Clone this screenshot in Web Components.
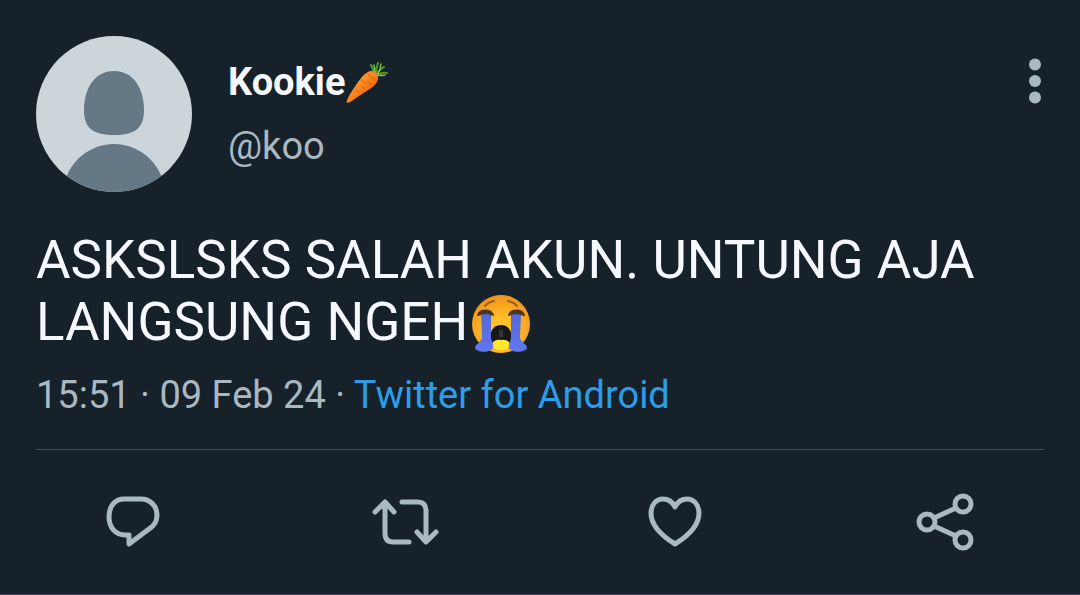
<!DOCTYPE html>
<html lang="id">
<head>
<meta charset="utf-8">
<meta name="viewport" content="width=device-width, initial-scale=1">
<title>Tweet</title>
<style>
  body {
    margin: 0;
    min-height: 100vh;
    box-sizing: border-box;
    border-bottom: 1px solid #3f4459;
    background: #16212a;
    color: #f5f8fc;
    font-family: Roboto, "Liberation Sans", sans-serif;
    --muted: #aab8c2;
    --link: #2b9de9;
    --line: #435059;
  }
</style>
</head>
<body>
<tweet-card>
  <tweet-header slot="header" handle="@koo">Kookie<tweet-emoji name="carrot"></tweet-emoji></tweet-header>
  ASKSLSKS SALAH AKUN. UNTUNG AJA LANGSUNG NGEH<tweet-emoji name="sob"></tweet-emoji>
  <tweet-meta slot="meta" source="Twitter for Android">15:51 · 09 Feb 24 · </tweet-meta>
  <tweet-actions slot="actions"></tweet-actions>
</tweet-card>

<script>
// small helper: every component only needs a shadow root with its markup
function render(el, html) {
  el.attachShadow({ mode: "open" }).innerHTML = html;
}

class TweetCard extends HTMLElement {
  constructor() {
    super();
    render(this, `
      <style>
        :host { display: block; }
        .content { padding: 36px 36px 0; }
        p {
          margin: 37px 0 18px;
          font-size: 53px;
          line-height: 62px;
        }
        hr {
          margin: 30px 0;
          border: 0;
          border-top: 1px solid var(--line);
        }
      </style>
      <article>
        <div class="content">
          <slot name="header"></slot>
          <p><slot></slot></p>
          <slot name="meta"></slot>
          <hr>
        </div>
        <slot name="actions"></slot>
      </article>
    `);
  }
}

class TweetAvatar extends HTMLElement {
  constructor() {
    super();
    render(this, `
      <style>
        :host { display: block; flex: none; width: 156px; height: 156px; border-radius: 50%; overflow: hidden; background: #ccd6da; }
        svg { display: block; width: 100%; height: 100%; }
      </style>
      <svg viewBox="0 0 156 156" fill="#657886" role="img" aria-label="Avatar">
        <path d="M78 35C97 35 108 52 108 74C108 93 98 99 78 99C58 99 48 93 48 74C48 52 59 35 78 35Z"/>
        <circle cx="78" cy="159" r="51"/>
      </svg>
    `);
  }
}

class TweetHeader extends HTMLElement {
  constructor() {
    super();
    render(this, `
      <style>
        :host { display: block; }
        header { display: flex; align-items: center; gap: 36px; }
        .user { flex: 1; font-size: 38px; line-height: 64px; }
        .row { display: flex; justify-content: space-between; align-items: center; }
        .name { font-weight: 700; }
        .handle { color: var(--muted); }
        button { display: block; padding: 0; border: 0; background: none; color: var(--muted); cursor: pointer; }
        svg { display: block; width: 18px; height: 48px; }
      </style>
      <header>
        <tweet-avatar></tweet-avatar>
        <div class="user">
          <div class="row">
            <span class="name"><slot></slot></span>
            <button type="button" aria-label="Menu">
              <svg viewBox="0 0 18 48" fill="currentColor">
                <circle cx="9" cy="6.5" r="6"/><circle cx="9" cy="23" r="6"/><circle cx="9" cy="39.5" r="6"/>
              </svg>
            </button>
          </div>
          <div class="handle">${this.getAttribute("handle")}</div>
        </div>
      </header>
    `);
  }
}

class TweetMeta extends HTMLElement {
  constructor() {
    super();
    render(this, `
      <style>
        :host { display: block; font-size: 38px; line-height: 48px; color: var(--muted); }
        a { color: var(--link); text-decoration: none; }
      </style>
      <slot></slot><a href="#">${this.getAttribute("source")}</a>
    `);
  }
}

// emojis are drawn, so they look the same on every system
const emojis = {
  carrot: {
    label: "wortel",
    svg: `
      <svg viewBox="0 0 44 44" width="44" height="44">
        <defs>
          <linearGradient id="c" x1="0" y1="0" x2="1" y2="1">
            <stop offset=".3" stop-color="#ff9a2e"/><stop offset=".7" stop-color="#ee6a0a"/>
          </linearGradient>
        </defs>
        <g fill="none" stroke-linecap="round">
          <path d="M30 14Q28 8 26 4M31 13Q31 7 33 2M32 13Q36 7 39 6M33 14Q37 11 42 12" stroke="#4e9a2b" stroke-width="2"/>
          <path d="M30 13Q30 8 29 4M33 13Q35 9 36 3M33 14Q37 15 40 14" stroke="#86bd45" stroke-width="1.5"/>
        </g>
        <path d="M2 42C0 40 7 30 11 24C16 17 20 11 26 10C32 10 35 15 32 21C29 26 23 29 17 33C11 37 5 42 2 42Z" fill="url(#c)"/>
        <path d="M16 19l4 3M23 13l3 3M26 23l-4-2M11 29l3 2M19 28l-2-2M30 18l-3-1" stroke="#d85c08" stroke-width="1" stroke-linecap="round"/>
      </svg>`
  },
  sob: {
    label: "menangis",
    svg: `
      <svg viewBox="0 0 64 60" width="64" height="60">
        <defs>
          <radialGradient id="f" cx=".5" cy=".65" r=".62">
            <stop offset=".4" stop-color="#ffc02c"/><stop offset="1" stop-color="#f2961a"/>
          </radialGradient>
          <linearGradient id="t" x1="0" y1="0" x2="0" y2="1">
            <stop offset="0" stop-color="#5268d8"/><stop offset="1" stop-color="#6277ee"/>
          </linearGradient>
        </defs>
        <circle cx="33" cy="30" r="29" fill="url(#f)"/>
        <path d="M17 12Q20 8 26 7M40 7Q46 8 49 12" fill="none" stroke="#9b5a16" stroke-width="2" stroke-linecap="round"/>
        <path d="M22 46C22 36 26 31 33 31C40 31 44 36 44 46Q44 52 39 54H27Q22 52 22 46Z" fill="#17181c"/>
        <path d="M31 36h4v7h-4z" fill="#34343a"/>
        <path d="M23 51Q26 45 33 46Q40 45 43 51Q40 56 33 56Q26 56 23 51Z" fill="#ffe62e"/>
        <path d="M13 20C14 17 22 17 23 20V43C23 47 26 50 25 54C23 59 9 59 7 54C7 50 14 48 14 43Z" fill="url(#t)"/>
        <path d="M53 20C52 17 44 17 43 20V43C43 47 40 50 41 54C43 59 57 59 59 54C59 50 52 48 52 43Z" fill="url(#t)"/>
        <path d="M10 21C12 15 23 15 25 21Q18 17 10 21ZM56 21C54 15 43 15 41 21Q48 17 56 21Z" fill="#50351a" stroke="#50351a" stroke-width="2" stroke-linejoin="round"/>
      </svg>`
  }
};

class TweetEmoji extends HTMLElement {
  constructor() {
    super();
    const emoji = emojis[this.getAttribute("name")];
    // negative margins keep the emoji from making its line taller
    render(this, `
      <style>
        :host { display: inline-block; margin: -8px 0 -4px; vertical-align: middle; line-height: 0; }
        svg { display: block; }
      </style>
      <span role="img" aria-label="${emoji.label}">${emoji.svg}</span>
    `);
  }
}

const icons = {
  reply: `<path d="M34 19H51C60 19 67 26 67 35C67 42 64 46 59 49L39 64V55H35C26 55 19 48 19 37C19 26 25 19 34 19Z"/>`,
  retweet: `<path d="M15 32L25 22L34 32M25 23V53Q25 62 33 62H49M42 22H58Q66 22 66 31V61M57 52L66 62L76 52"/>`,
  like: `<path d="M45 27C41 19 35 19 33 19C26 19 21 25 21 33C21 45 32 56 45 64C58 56 69 45 69 33C69 25 64 19 57 19C55 19 49 19 45 27Z"/>`,
  share: `<circle cx="27" cy="42" r="8"/><circle cx="63" cy="24" r="8"/><circle cx="63" cy="60" r="8"/><path d="M34 38L56 28M34 46L56 56"/>`
};

class TweetActions extends HTMLElement {
  constructor() {
    super();
    const buttons = Object.keys(icons).map((name) => `
      <button type="button" aria-label="${name}">
        <svg viewBox="0 0 90 80">${icons[name]}</svg>
      </button>`).join("");
    render(this, `
      <style>
        :host { display: grid; grid-template-columns: repeat(4, 1fr); justify-items: center; }
        button { padding: 0; border: 0; background: none; color: var(--muted); cursor: pointer; }
        svg {
          display: block;
          width: 90px;
          height: 80px;
          fill: none;
          stroke: currentColor;
          stroke-width: 5;
          stroke-linecap: round;
          stroke-linejoin: round;
        }
      </style>
      ${buttons}
    `);
  }
}

customElements.define("tweet-card", TweetCard);
customElements.define("tweet-avatar", TweetAvatar);
customElements.define("tweet-header", TweetHeader);
customElements.define("tweet-meta", TweetMeta);
customElements.define("tweet-emoji", TweetEmoji);
customElements.define("tweet-actions", TweetActions);
</script>
</body>
</html>
